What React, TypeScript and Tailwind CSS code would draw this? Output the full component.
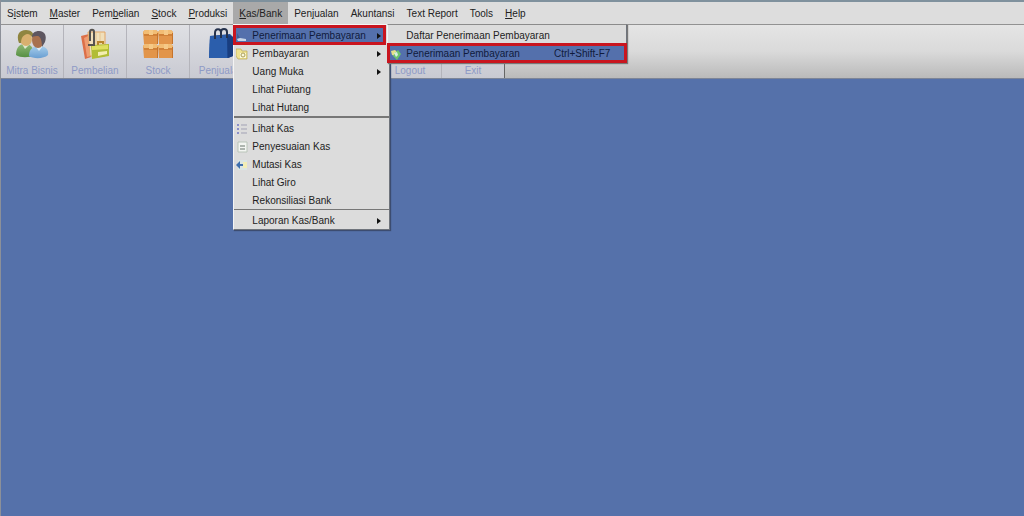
import type { ReactNode } from "react";

type Item = {
  label: string;
  icon?: ReactNode;
  shortcut?: string;
  arrow?: boolean;
  active?: boolean;
};

const menus: [string, string, string][] = [
  ["S", "i", "stem"],
  ["", "M", "aster"],
  ["Pem", "b", "elian"],
  ["", "S", "tock"],
  ["", "P", "roduksi"],
  ["", "K", "as/Bank"],
  ["Pen", "j", "ualan"],
  ["Akuntansi", "", ""],
  ["Text Report", "", ""],
  ["Tools", "", ""],
  ["", "H", "elp"]
];

function UsersIcon() {
  return (
    <svg width="34" height="32" viewBox="0 0 34 32">
      <defs>
        <linearGradient id="green" x1="0" y1="0" x2="0" y2="1">
          <stop offset="0" stopColor="#8fb876" />
          <stop offset="1" stopColor="#558f42" />
        </linearGradient>
        <linearGradient id="sky" x1="0" y1="0" x2="0" y2="1">
          <stop offset="0" stopColor="#a6cdeb" />
          <stop offset="1" stopColor="#6a9fd2" />
        </linearGradient>
      </defs>
      <path d="M1 27c0-8 4-11 9-11s9 3 9 11c-4 3-14 3-18 0z" fill="url(#green)" />
      <path d="M7 16l3 5 5-5z" fill="#dfe8cf" />
      <ellipse cx="11" cy="11" rx="6" ry="7" fill="#d8b06f" />
      <path d="M4 15C1 7 4 2 11 2c5 0 9 3 7 9-1-3-3-5-6-5-4 1-6 4-6 9z" fill="#8f8540" />
      <path d="M14 28c0-7 4-10 10-10s10 3 9 9c-4 4-15 4-19 1z" fill="url(#sky)" />
      <path d="M20 18l4 5 4-5z" fill="#dcebf6" />
      <ellipse cx="23" cy="12" rx="6" ry="8" fill="#a8714f" />
      <path d="M17 9c0-4 3-6 7-6 6 0 8 5 6 11l-3 5c0-5-1-10-4-11-2 0-4 0-6 1z" fill="#5d5660" />
    </svg>
  );
}

function PurchaseIcon() {
  return (
    <svg width="32" height="32" viewBox="0 0 32 32">
      <path d="M2 8l8-2 2 23-6 2z" fill="#dc6f48" />
      <path d="M5 10l6-3 1 21-4 1z" fill="#ee9c72" />
      <path d="M9 4h17v24H11z" fill="#f0dfbb" stroke="#e3a564" />
      <path d="M17 5v11M21 5v11" stroke="#e6c590" />
      <path d="M12 17l18-1v12l-17 3z" fill="#b1bd35" />
      <path d="M13 18l16-1v4l-16 1z" fill="#dedf60" />
      <path d="M19 24l9-1v3l-9 2z" fill="#f3eeb0" />
      <path d="M19 17v-3h5v2" fill="none" stroke="#b8862e" strokeWidth="2" />
      <path d="M9 17h6V4c0-3-4-3-4 0v9" fill="none" stroke="#56534f" strokeWidth="2" />
    </svg>
  );
}

function StockIcon() {
  return (
    <svg width="32" height="32" viewBox="0 0 32 32">
      {["translate(1 2)", "translate(16 2)", "translate(1 16)", "translate(16 16)"].map((t) => (
        <g key={t} transform={t}>
          <path d="M0 2l2-2h11l2 2-1 12H1z" fill="#e2954a" />
          <path d="M0 2l2-2h11l2 2-1 2H1z" fill="#f2bd74" />
          <path d="M1 4h13v2H1z" fill="#d08138" />
          <path d="M6 0h4v5H6z" fill="#f5c987" />
          <path d="M14 3h1v11h-1z" fill="#c6742b" />
        </g>
      ))}
    </svg>
  );
}

function BagIcon() {
  return (
    <svg width="26" height="32" viewBox="0 0 26 32">
      <path d="M2 8l20-2 3 3v19l-5 2H1z" fill="#1f4c96" />
      <path d="M2 8l17-1v23H1z" fill="#2b5eac" />
      <path d="M19 7l6 2v19l-5 2z" fill="#193e80" />
      <path d="M7 11V5c0-5 6-5 6 0v5M13 8V4c0-4 6-4 6 0v6" fill="none" stroke="#25324c" strokeWidth="2" />
    </svg>
  );
}

function FolderIcon() {
  return (
    <svg width="12" height="12" viewBox="0 0 12 12">
      <path d="M0 1h5l1 2h5v8H2L0 8z" fill="#efe291" stroke="#b9a850" strokeWidth=".7" />
      <path d="M4 5h6v5H4z" fill="#fbf8d8" />
      <circle cx="7" cy="7" r="2" fill="none" stroke="#a99c59" />
    </svg>
  );
}

function ReceiveIcon() {
  return (
    <svg width="12" height="12" viewBox="0 0 12 12">
      <path d="M1 3l3 5H1z" fill="#3f5f97" />
      <path d="M1 9l3-1 6 1v2H2z" fill="#c7d4e6" />
    </svg>
  );
}

function ListIcon() {
  return (
    <svg width="12" height="12" viewBox="0 0 12 12">
      <path d="M1 1h2v2H1zM1 5h2v2H1zM1 9h2v2H1z" fill="#8a8fca" />
      <path d="M5 2h6M5 6h6M5 10h6" stroke="#a1a1b4" />
    </svg>
  );
}

function SheetIcon() {
  return (
    <svg width="12" height="12" viewBox="0 0 12 12">
      <path d="M2 1h9v10H2z" fill="#f3f5f2" stroke="#b9c4b9" />
      <path d="M4 5h5M4 8h5" stroke="#69756d" />
    </svg>
  );
}

function TransferIcon() {
  return (
    <svg width="12" height="12" viewBox="0 0 12 12">
      <path d="M2 1h9v10H2z" fill="#dbe6e3" />
      <path d="M7 3h4v6H7z" fill="#f2eeb6" />
      <path d="M0 6l4-4v3h3v2H4v3z" fill="#3f6fae" />
    </svg>
  );
}

function LeafIcon() {
  return (
    <svg width="12" height="12" viewBox="0 0 12 12">
      <path d="M1 3l4-1 3 3-3 3-3-1z" fill="#e6e28a" />
      <path d="M5 5l3-3 3 4-4 6-4-4z" fill="#6cc46c" />
      <path d="M4 5l3-1 1 3-2 2z" fill="#d9f0df" />
    </svg>
  );
}

const kasBank: Item[][] = [
  [
    { label: "Penerimaan Pembayaran", icon: <ReceiveIcon />, arrow: true, active: true },
    { label: "Pembayaran", icon: <FolderIcon />, arrow: true },
    { label: "Uang Muka", arrow: true },
    { label: "Lihat Piutang" },
    { label: "Lihat Hutang" }
  ],
  [
    { label: "Lihat Kas", icon: <ListIcon /> },
    { label: "Penyesuaian Kas", icon: <SheetIcon /> },
    { label: "Mutasi Kas", icon: <TransferIcon /> },
    { label: "Lihat Giro" },
    { label: "Rekonsiliasi Bank" }
  ],
  [{ label: "Laporan Kas/Bank", arrow: true }]
];

const penerimaan: Item[] = [
  { label: "Daftar Penerimaan Pembayaran" },
  { label: "Penerimaan Pembayaran", icon: <LeafIcon />, shortcut: "Ctrl+Shift-F7", active: true }
];

const tools: { label?: string; icon?: ReactNode }[] = [
  { label: "Mitra Bisnis", icon: <UsersIcon /> },
  { label: "Pembelian", icon: <PurchaseIcon /> },
  { label: "Stock", icon: <StockIcon /> },
  { label: "Penjualan", icon: <BagIcon /> },
  {},
  {},
  { label: "Logout" },
  { label: "Exit" }
];

function MenuRow({ item }: { item: Item }) {
  return (
    <button
      role="menuitem"
      className={`flex h-[18px] w-full items-center whitespace-nowrap pt-px pl-[2px] pr-1 text-left ${
        item.active ? "bg-[#5470ac] text-[#101b3c] outline-3 -outline-offset-2 outline-[#c9151f]" : ""
      }`}
    >
      <span className="flex w-4 shrink-0 items-center">{item.icon}</span>
      <span>{item.label}</span>
      {item.shortcut ? <span className="ml-auto pr-3">{item.shortcut}</span> : null}
      {item.arrow ? (
        <svg className="ml-auto" width="4" height="6" viewBox="0 0 4 6">
          <path d="M0 0l4 3-4 3z" fill="#111" />
        </svg>
      ) : null}
    </button>
  );
}

function KasBankMenu() {
  return (
    <div
      role="menu"
      className="absolute left-0 top-full z-10 w-[157px] border border-t-[#f4f4f4] border-l-[#f4f4f4] border-r-[#6f747c] border-b-[#6f747c] bg-[#dcdcdc] pt-px shadow-[1px_1px_1px_#3c4c70]"
    >
      {kasBank.map((group, i) => (
        <div
          key={i}
          className={`pr-1 ${i === 0 ? "" : i === 1 ? "border-t-2 border-[#777] pt-px" : "border-t border-[#777] pt-px"}`}
        >
          {group.map((item) => (
            <MenuRow key={item.label} item={item} />
          ))}
        </div>
      ))}
      <div
        role="menu"
        className="absolute -top-px left-[153px] w-[240px] border border-t-[#8b8b8b] border-l-[#f4f4f4] border-r-[#6f747c] border-b-[#6f747c] bg-[#dcdcdc] pt-px shadow-[1px_1px_1px_#777]"
      >
        {penerimaan.map((item) => (
          <MenuRow key={item.label} item={item} />
        ))}
      </div>
    </div>
  );
}

export default function App() {
  return (
    <div className="flex min-h-screen flex-col overflow-hidden border-l border-[#8c9099] bg-[#5571aa] font-['Liberation_Sans',Arial,sans-serif] text-[10px] leading-3 text-[#222]">
      <nav className="flex h-[25px] shrink-0 border-t-2 border-b border-t-[#7f919d] border-b-[#929292] bg-[#dddddd]">
        {menus.map(([before, key, after]) => {
          const open = after === "as/Bank";
          return (
            <div key={before + key + after} className="relative">
              <button className={`h-full whitespace-nowrap px-[6px] pt-px ${open ? "bg-[#a9a9a9]" : ""}`}>
                {before}
                <u className="underline-offset-1">{key}</u>
                {after}
              </button>
              {open ? <KasBankMenu /> : null}
            </div>
          );
        })}
      </nav>
      <div className="flex h-[54px] shrink-0 border-b border-[#7d8597] bg-linear-to-b from-[#e5e5e5] via-[#dadada] to-[#bababa]">
        {tools.map((tool, i) =>
          tool.label ? (
            <button
              key={i}
              className="flex w-[63px] shrink-0 flex-col items-center justify-between border-r border-[#b4b4bb] bg-linear-to-b from-[#dfe0e4] to-[#c9cad2] pt-[3px] pb-px text-[#8e9ac6] last:border-[#666]"
            >
              <span className="h-8">{tool.icon}</span>
              <span>{tool.label}</span>
            </button>
          ) : (
            <div key={i} className="w-[63px] shrink-0" />
          )
        )}
      </div>
      <main className="flex-1" />
    </div>
  );
}
